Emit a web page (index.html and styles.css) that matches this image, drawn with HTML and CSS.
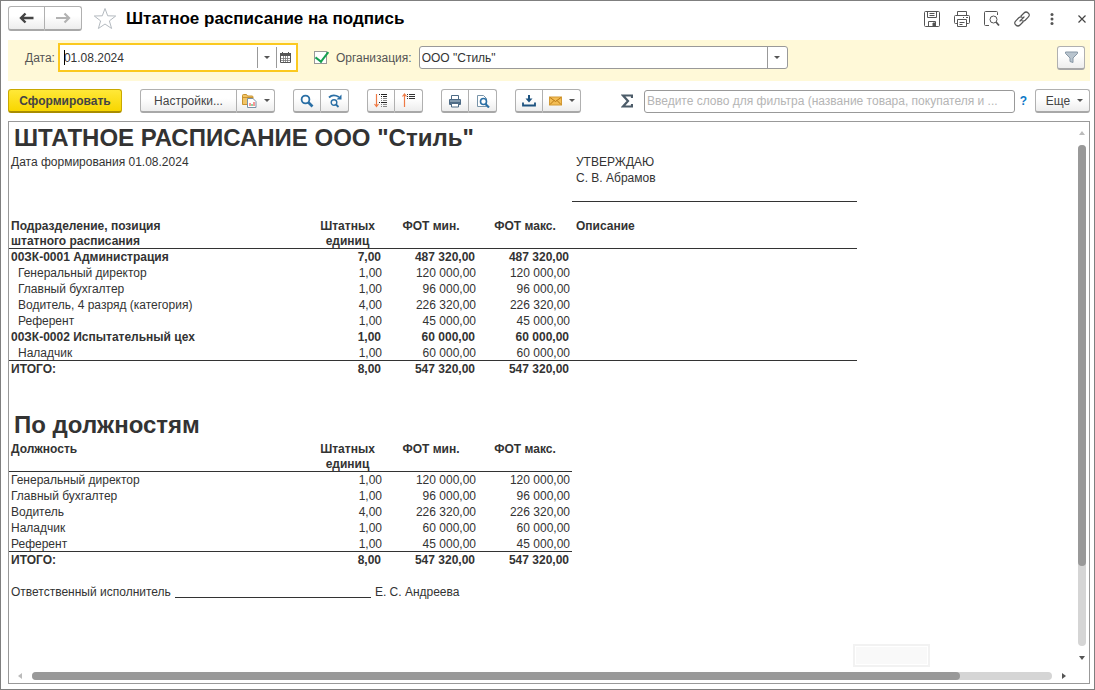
FILE: index.html
```html
<!DOCTYPE html>
<html lang="ru">
<head>
<meta charset="utf-8">
<title>Штатное расписание на подпись</title>
<link rel="stylesheet" href="styles.css">
</head>
<body>
<div class="window">
  <header class="titlebar">
    <div class="group nav">
      <button type="button" class="btn" aria-label="Назад"><svg width="16" height="12" viewBox="0 0 16 12"><path d="M2 6h12.500M6.500 1.500L2 6l4.500 4.500" fill="none" stroke="#444" stroke-width="2.400"/></svg></button>
      <button type="button" class="btn" aria-label="Вперед"><svg width="16" height="12" viewBox="0 0 16 12"><path d="M1 6h12.500M9.500 1.500L14 6l-4.500 4.500" fill="none" stroke="#b2b2b2" stroke-width="2.200"/></svg></button>
    </div>
    <button type="button" class="plain star" aria-label="В избранное"><svg width="24" height="23" viewBox="0 0 24 23"><path d="M12 1.500l2.700 7.300 8 .2-6.300 4.900 2.200 7.600L12 17l-6.600 4.500 2.200-7.600L1.300 9l8-.2z" fill="#fff" stroke="#b4bac0"/></svg></button>
    <h1 class="title">Штатное расписание на подпись</h1>
    <div class="window-tools">
      <button type="button" class="plain" aria-label="Сохранить"><svg width="16" height="16" viewBox="0 0 16 16" fill="none" stroke="#555"><path d="M.5 1.500q0-1 1-1h13q1 0 1 1v13q0 1-1 1h-13q-1 0-1-1z"/><path d="M3.500.5v6h9v-6M5.500 2.500h5M5.500 4.500h5M4.500 15.500v-5h7v5"/><path d="M9 12h2v3.500H9z" fill="#555"/></svg></button>
      <button type="button" class="plain" aria-label="Печать"><svg width="16" height="16" viewBox="0 0 16 16" fill="none" stroke="#555"><path d="M3.500 4.500v-4h9v4M3.500 12.500h-2q-1 0-1-1v-6q0-1 1-1h13q1 0 1 1v6q0 1-1 1h-2"/><path d="M3.500 8.500h9v7h-9zM5.500 11.500h5M5.500 13.500h3M9 6.500h1M12 6.500h2"/></svg></button>
      <button type="button" class="plain" aria-label="Предварительный просмотр"><svg width="16" height="16" viewBox="0 0 16 16" fill="none" stroke="#555"><path d="M5 14.500H1.500q-1 0-1-1v-12q0-1 1-1h11q1 0 1 1V4"/><circle cx="9.500" cy="8.500" r="3.500"/><path d="M12 11l3 3.500" stroke-width="1.800"/></svg></button>
      <button type="button" class="plain" aria-label="Получить ссылку"><svg width="16" height="16" viewBox="0 0 16 16" fill="none" stroke="#555" stroke-width="1.200" stroke-linecap="round"><path d="M7 5l3-3q2-2 4.200 0t0 4.200l-3 3q-1.600 1.400-3.200.6M9 11l-3 3q-2 2-4.200 0t0-4.200l3-3q1.600-1.400 3.200-.6M6 10l4-4"/></svg></button>
      <button type="button" class="plain" aria-label="Дополнительно"><svg width="16" height="16" viewBox="0 0 16 16" fill="#555"><circle cx="8" cy="3.500" r="1.500"/><circle cx="8" cy="8" r="1.500"/><circle cx="8" cy="12.500" r="1.500"/></svg></button>
      <button type="button" class="plain" aria-label="Закрыть"><svg width="16" height="16" viewBox="0 0 16 16"><path d="M4.500 4.500l7 7M11.500 4.500l-7 7" stroke="#444" stroke-width="1.200"/></svg></button>
    </div>
  </header>

  <form class="filters">
    <label for="date">Дата:</label>
    <div class="combo date">
      <span class="cursor"></span>
      <input id="date" type="text" value="01.08.2024">
      <button type="button" class="drop" aria-label="Выбрать дату"><span class="caret"></span></button>
      <button type="button" class="drop calendar" aria-label="Календарь"><svg width="11" height="11" viewBox="0 0 11 11"><path d="M.5 1.500h10v9H.5z" fill="#fff" stroke="#555"/><path d="M0 1h11v3H0z" fill="#555"/><path d="M2.500 0v2M8.500 0v2" stroke="#555"/><path d="M1 6.500h9M1 8.500h9M3.500 4v6M5.500 4v6M7.500 4v6" stroke="#777" stroke-width=".8"/></svg></button>
    </div>
    <input id="use-org" class="check" type="checkbox" checked aria-label="Отбор по организации">
    <label for="org">Организация:</label>
    <div class="combo org">
      <input id="org" type="text" value='ООО "Стиль"'>
      <button type="button" class="drop" aria-label="Выбрать организацию"><span class="caret"></span></button>
    </div>
    <div class="group funnel">
      <button type="button" class="btn" aria-label="Фильтр"><svg width="13" height="12" viewBox="0 0 13 12"><path d="M.5 1h12v1.500L8 7v4.500L5 10.500V7L.5 2.500z" fill="#b8c4ce" stroke="#8797a5"/></svg></button>
    </div>
  </form>

  <div class="toolbar">
    <button type="button" class="btn primary">Сформировать</button>
    <div class="group">
      <button type="button" class="btn settings">Настройки...</button>
      <button type="button" class="btn wide" aria-label="Варианты отчета"><svg width="15" height="14" viewBox="0 0 15 14"><path d="M.5 1.500q0-1 1-1h3l1 1.500H10q1 0 1 1V10.500H.5z" fill="#f2c566" stroke="#c8922e"/><path d="M.5 3.500h10.500" stroke="#c8922e"/><path d="M5.500 4.500h5.500l3 3v6H5.500z" fill="#fff" stroke="#7b91a5"/><path d="M8 9v3" stroke="#e33"/><path d="M10 10v2" stroke="#2a4"/><path d="M12 8v4" stroke="#e33"/></svg><span class="caret"></span></button>
    </div>
    <div class="group">
      <button type="button" class="btn icon" aria-label="Найти"><svg width="14" height="14" viewBox="0 0 14 14" fill="none" stroke="#2a6fa5"><circle cx="5.500" cy="5.500" r="3.900" stroke-width="1.800"/><path d="M8.500 8.500l4 4" stroke-width="2.600"/></svg></button>
      <button type="button" class="btn icon" aria-label="Найти далее"><svg width="14" height="14" viewBox="0 0 14 14" fill="none" stroke="#2a6fa5"><path d="M1 3.500Q5-.5 11 3" stroke-width="1.800"/><path d="M13.500.5v5h-5z" fill="#2a6fa5" stroke="none"/><circle cx="6" cy="8.500" r="2.800" stroke-width="1.400"/><path d="M8 10.500l2.500 2.500" stroke-width="1.800"/></svg></button>
    </div>
    <div class="group">
      <button type="button" class="btn icon" aria-label="Развернуть группы"><svg width="14" height="15" viewBox="0 0 14 15" fill="none"><path d="M2.500 1v12M.5 11l2 2.500 2-2.500" stroke="#ee7a45" stroke-width="1.200"/><path d="M5 1.500h1M7 1.500h6M7 3.500h1M9 3.500h4M5 9.500h1M7 9.500h6" stroke="#222"/><path d="M7 5.500h1M9 5.500h4M7 7.500h1M9 7.500h4M7 11.500h1M9 11.500h4M7 13.500h1M9 13.500h4" stroke="#888"/></svg></button>
      <button type="button" class="btn icon" aria-label="Свернуть группы"><svg width="14" height="15" viewBox="0 0 14 15" fill="none"><path d="M2.500 14V1M.5 3.500l2-2.500 2 2.500" stroke="#ee7a45" stroke-width="1.200"/><path d="M5 1.500h1M7 1.500h6M5 3.500h1M7 3.500h6M5 5.500h1M7 5.500h6" stroke="#333"/></svg></button>
    </div>
    <div class="group">
      <button type="button" class="btn icon" aria-label="Печать"><svg width="14" height="14" viewBox="0 0 14 14"><path d="M3.500 5V1.500h7V5" fill="#fff" stroke="#4d6a85"/><rect x="1" y="5" width="12" height="6" rx="1" fill="#4d6a85"/><path d="M2 7h10" stroke="#b9c9d6"/><path d="M3.500 9.500h7v3.500h-7z" fill="#fff" stroke="#4d6a85"/></svg></button>
      <button type="button" class="btn icon" aria-label="Просмотр"><svg width="14" height="14" viewBox="0 0 14 14" fill="none"><path d="M1.500 1.500h6l3 3v8h-9z" fill="#fff" stroke="#7894a9"/><circle cx="7.500" cy="7.500" r="3" fill="#fff" stroke="#2a6fa5" stroke-width="1.600"/><path d="M9.500 10l3.500 3.500" stroke="#2a6fa5" stroke-width="2.200"/></svg></button>
    </div>
    <div class="group">
      <button type="button" class="btn icon" aria-label="Сохранить"><svg width="14" height="13" viewBox="0 0 14 13" fill="none"><path d="M7 1v4" stroke="#1d5380" stroke-width="2"/><path d="M3.500 4.500h7L7 8.500z" fill="#1d5380"/><path d="M1 8.500v3h12v-3" stroke="#1d5380" stroke-width="1.800"/></svg></button>
      <button type="button" class="btn wide" aria-label="Отправить"><svg width="13" height="10" viewBox="0 0 13 10"><rect x=".5" y="1" width="12" height="8" fill="#f3bd55" stroke="#d39a35"/><path d="M1 1.500l5.500 4 5.500-4M1 8.500l4-4M12 8.500l-4-4" fill="none" stroke="#b97a16"/></svg><span class="caret"></span></button>
    </div>
    <div class="search">
      <button type="button" class="plain" aria-label="Сумма"><svg width="12" height="14" viewBox="0 0 12 14"><path d="M11 4V1.500H2L7 7l-5 5.500h9V10" fill="none" stroke="#4c5c69" stroke-width="2.200"/></svg></button>
      <input class="query" type="text" aria-label="Фильтр отчета" placeholder="Введите слово для фильтра (название товара, покупателя и ...">
      <button type="button" class="plain help">?</button>
    </div>
    <button type="button" class="btn more">Еще<span class="caret"></span></button>
  </div>

  <main class="sheet">
    <div class="page">
      <h2 class="heading">ШТАТНОЕ РАСПИСАНИЕ ООО "Стиль"</h2>
      <div class="meta">
        <div class="formed">Дата формирования 01.08.2024</div>
        <div class="approve"><div>УТВЕРЖДАЮ</div><div>С. В. Абрамов</div></div>
      </div>
      <table class="report">
        <colgroup><col class="c-name"><col class="c-units"><col class="c-sum"><col class="c-sum"><col class="c-note"></colgroup>
        <thead><tr><th class="name">Подразделение, позиция<br>штатного расписания</th><th>Штатных<br>единиц</th><th>ФОТ мин.</th><th>ФОТ макс.</th><th class="note">Описание</th></tr></thead>
        <tbody>
          <tr class="total"><td>00ЗК-0001 Администрация</td><td>7,00</td><td>487 320,00</td><td>487 320,00</td><td></td></tr>
          <tr class="child"><td>Генеральный директор</td><td>1,00</td><td>120 000,00</td><td>120 000,00</td><td></td></tr>
          <tr class="child"><td>Главный бухгалтер</td><td>1,00</td><td>96 000,00</td><td>96 000,00</td><td></td></tr>
          <tr class="child"><td>Водитель, 4 разряд (категория)</td><td>4,00</td><td>226 320,00</td><td>226 320,00</td><td></td></tr>
          <tr class="child"><td>Референт</td><td>1,00</td><td>45 000,00</td><td>45 000,00</td><td></td></tr>
          <tr class="total"><td>00ЗК-0002 Испытательный цех</td><td>1,00</td><td>60 000,00</td><td>60 000,00</td><td></td></tr>
          <tr class="child"><td>Наладчик</td><td>1,00</td><td>60 000,00</td><td>60 000,00</td><td></td></tr>
        </tbody>
        <tfoot><tr class="total"><td>ИТОГО:</td><td>8,00</td><td>547 320,00</td><td>547 320,00</td><td></td></tr></tfoot>
      </table>
      <h2 class="heading second">По должностям</h2>
      <table class="report">
        <colgroup><col class="c-name"><col class="c-units"><col class="c-sum"><col class="c-sum"></colgroup>
        <thead><tr><th class="name">Должность</th><th>Штатных<br>единиц</th><th>ФОТ мин.</th><th>ФОТ макс.</th></tr></thead>
        <tbody>
          <tr><td>Генеральный директор</td><td>1,00</td><td>120 000,00</td><td>120 000,00</td></tr>
          <tr><td>Главный бухгалтер</td><td>1,00</td><td>96 000,00</td><td>96 000,00</td></tr>
          <tr><td>Водитель</td><td>4,00</td><td>226 320,00</td><td>226 320,00</td></tr>
          <tr><td>Наладчик</td><td>1,00</td><td>60 000,00</td><td>60 000,00</td></tr>
          <tr><td>Референт</td><td>1,00</td><td>45 000,00</td><td>45 000,00</td></tr>
        </tbody>
        <tfoot><tr class="total"><td>ИТОГО:</td><td>8,00</td><td>547 320,00</td><td>547 320,00</td></tr></tfoot>
      </table>
      <div class="signature"><span>Ответственный исполнитель</span><span class="line"></span><span>Е. С. Андреева</span></div>
    </div>
    <div class="vscroll"><span class="arrow up"></span><div class="track"><div class="thumb"></div></div><span class="arrow down"></span></div>
    <div class="hscroll"><span class="arrow left"></span><div class="track"><div class="thumb"></div></div><span class="arrow right"></span></div>
    <div class="ghost"></div>
  </main>
</div>
</body>
</html>
```
FILE: styles.css
```css
* { box-sizing: border-box; }

body {
  margin: 0;
  font: 12px/16px "Liberation Sans", Arial, sans-serif;
  color: #333;
  background: #fff;
}

button, input { font: inherit; color: inherit; }
button { padding: 0; cursor: pointer; }
svg { display: block; flex: none; }

.window {
  display: flex;
  flex-direction: column;
  min-height: 100vh;
  padding: 0 4px 5px 7px;
  border: 1px solid #7f7f7f;
}

/* Buttons */
.plain {
  display: flex;
  align-items: center;
  justify-content: center;
  border: 0;
  background: none;
}

.group { display: flex; }

.btn {
  display: flex;
  align-items: center;
  justify-content: center;
  height: 24px;
  border: 1px solid #b0b0b0;
  border-bottom: 2px solid #a8a8a8;
  border-radius: 3px;
  background: linear-gradient(#fff 40%, #ededed);
  color: #444;
}

.group .btn + .btn { border-left: 0; border-radius: 0 3px 3px 0; }
.group .btn:first-child:not(:last-child) { border-radius: 3px 0 0 3px; }

.caret {
  flex: none;
  border: 3px solid transparent;
  border-top: 3px solid #555;
  border-bottom: 0;
}

/* Title bar */
.titlebar {
  display: flex;
  align-items: center;
  height: 39px;
  padding-bottom: 4px;
}

.nav .btn { width: 37px; height: 25px; }
.star { margin: 0 9px 0 11px; }

.title {
  flex: 1;
  margin: 0;
  font-size: 17px;
  line-height: 24px;
  color: #000;
}

.window-tools { display: flex; gap: 14px; }

/* Filter strip */
.filters {
  display: flex;
  align-items: center;
  height: 41px;
  padding: 3px 5px 9px 17px;
  background: #fff9d8;
  color: #555;
}

.combo {
  position: relative;
  display: flex;
  background: #fff;
  border: 1px solid #999;
  border-radius: 3px;
  color: #333;
}

.combo input {
  flex: 1;
  min-width: 0;
  height: 21px;
  padding: 0 2px;
  border: 0;
  background: none;
  outline: 0;
}

.drop {
  display: flex;
  align-items: center;
  justify-content: center;
  width: 19px;
  border: 0;
  border-left: 1px solid #999;
  background: none;
}

.date {
  width: 240px;
  margin: 0 16px 0 3px;
  padding: 2px;
  border: 2px solid #fbc91f;
  border-radius: 0;
}

.date .calendar { width: 18px; }

.cursor {
  position: absolute;
  left: 4px;
  top: 5px;
  width: 1px;
  height: 15px;
  background: #000;
}

.check {
  appearance: none;
  width: 13px;
  height: 13px;
  margin: 0 9px 0 0;
  border: 1px solid #999;
  background: #fff;
  position: relative;
}

.check:checked::after {
  content: "";
  position: absolute;
  left: 3px;
  top: -3px;
  width: 6px;
  height: 11px;
  border: solid #16a050;
  border-width: 0 2px 2px 0;
  transform: rotate(38deg);
}

.org { width: 369px; margin-left: 7px; }
.org .drop { width: 20px; }
.funnel { margin-left: auto; }
.funnel .btn { width: 28px; }

/* Command bar */
.toolbar {
  display: flex;
  align-items: center;
  gap: 18px;
  height: 40px;
}

.primary {
  width: 114px;
  border-color: #c9a800;
  border-bottom-color: #a98d00;
  background: linear-gradient(#ffe838, #f8d600);
  font-weight: bold;
}

.settings { width: 97px; }
.icon { width: 28px; }
.wide { width: 38px; gap: 7px; }

.search {
  display: flex;
  flex: 1;
  align-items: center;
  margin: 0 -10px 0 22px;
}

.query {
  flex: 1;
  min-width: 0;
  height: 23px;
  margin: 0 5px 0 11px;
  padding: 0 2px;
  border: 1px solid #999;
  border-radius: 3px;
  text-overflow: ellipsis;
}

.query::placeholder { color: #b5b5b5; opacity: 1; }
.help { width: 7px; color: #0a78c8; font-weight: bold; }
.more { width: 55px; gap: 7px; padding-left: 4px; }

/* Spreadsheet area */
.sheet {
  position: relative;
  display: grid;
  grid-template-columns: minmax(0, 1fr) 15px;
  grid-template-rows: 1fr 15px;
  flex: 1;
  border: 1px solid #999;
}

.page { overflow: hidden; }

.heading {
  margin: 0;
  padding-left: 5px;
  font-size: 24px;
  line-height: 32px;
}

.second { margin-top: 32px; }

.meta { display: flex; margin-bottom: 16px; padding-left: 2px; }
.formed { width: 561px; }

.approve {
  width: 285px;
  height: 48px;
  padding-left: 4px;
  border-bottom: 1px solid #333;
}

.report {
  table-layout: fixed;
  width: 0;
  border-collapse: separate;
  border-spacing: 0;
}

.c-name { width: 302px; }
.c-units { width: 73px; }
.c-sum { width: 94px; }
.c-note { width: 285px; }

.report th {
  padding: 1px 0 0;
  line-height: 15px;
  vertical-align: top;
}

.report .name { padding-left: 2px; text-align: left; }
.report .note { padding-left: 4px; text-align: left; }

.report td {
  height: 16px;
  padding: 0 2px;
  line-height: 16px;
  text-align: right;
  white-space: nowrap;
}

.report td:first-child { text-align: left; }
.report .child td:first-child { padding-left: 9px; }
.report .total td { font-weight: bold; padding-right: 3px; }

.report th,
.report tbody tr:last-child td { box-shadow: inset 0 -1px #333; }

.signature {
  display: flex;
  gap: 4px;
  margin-top: 16px;
  padding-left: 2px;
}

.signature .line {
  width: 196px;
  height: 14px;
  border-bottom: 1px solid #333;
}

/* Scroll bars */
.vscroll, .hscroll { display: flex; align-items: center; }
.vscroll { flex-direction: column; padding: 9px 0 8px; gap: 10px; }
.hscroll { padding: 0 8px 0 9px; gap: 10px; }
.track { flex: 1; border-radius: 4px; background: #d5d5d5; }
.thumb { border-radius: 4px; background: #999; }
.vscroll .track { width: 8px; }
.vscroll .thumb { width: 8px; height: 84%; }
.hscroll .track { height: 8px; }
.hscroll .thumb { height: 8px; width: 91%; }

.arrow { flex: none; border: 3px solid transparent; }
.up { border-top: 0; border-bottom: 4px solid #bbb; }
.down { border-bottom: 0; border-top: 4px solid #555; }
.left { border-left: 0; border-right: 4px solid #bbb; }
.right { border-right: 0; border-left: 4px solid #555; }

.ghost {
  position: absolute;
  right: 159px;
  bottom: 16px;
  width: 77px;
  height: 23px;
  border: 2px solid #f2f2f2;
  background: #f9f9f9;
  box-shadow: inset 0 0 0 1px #fff;
}
```
